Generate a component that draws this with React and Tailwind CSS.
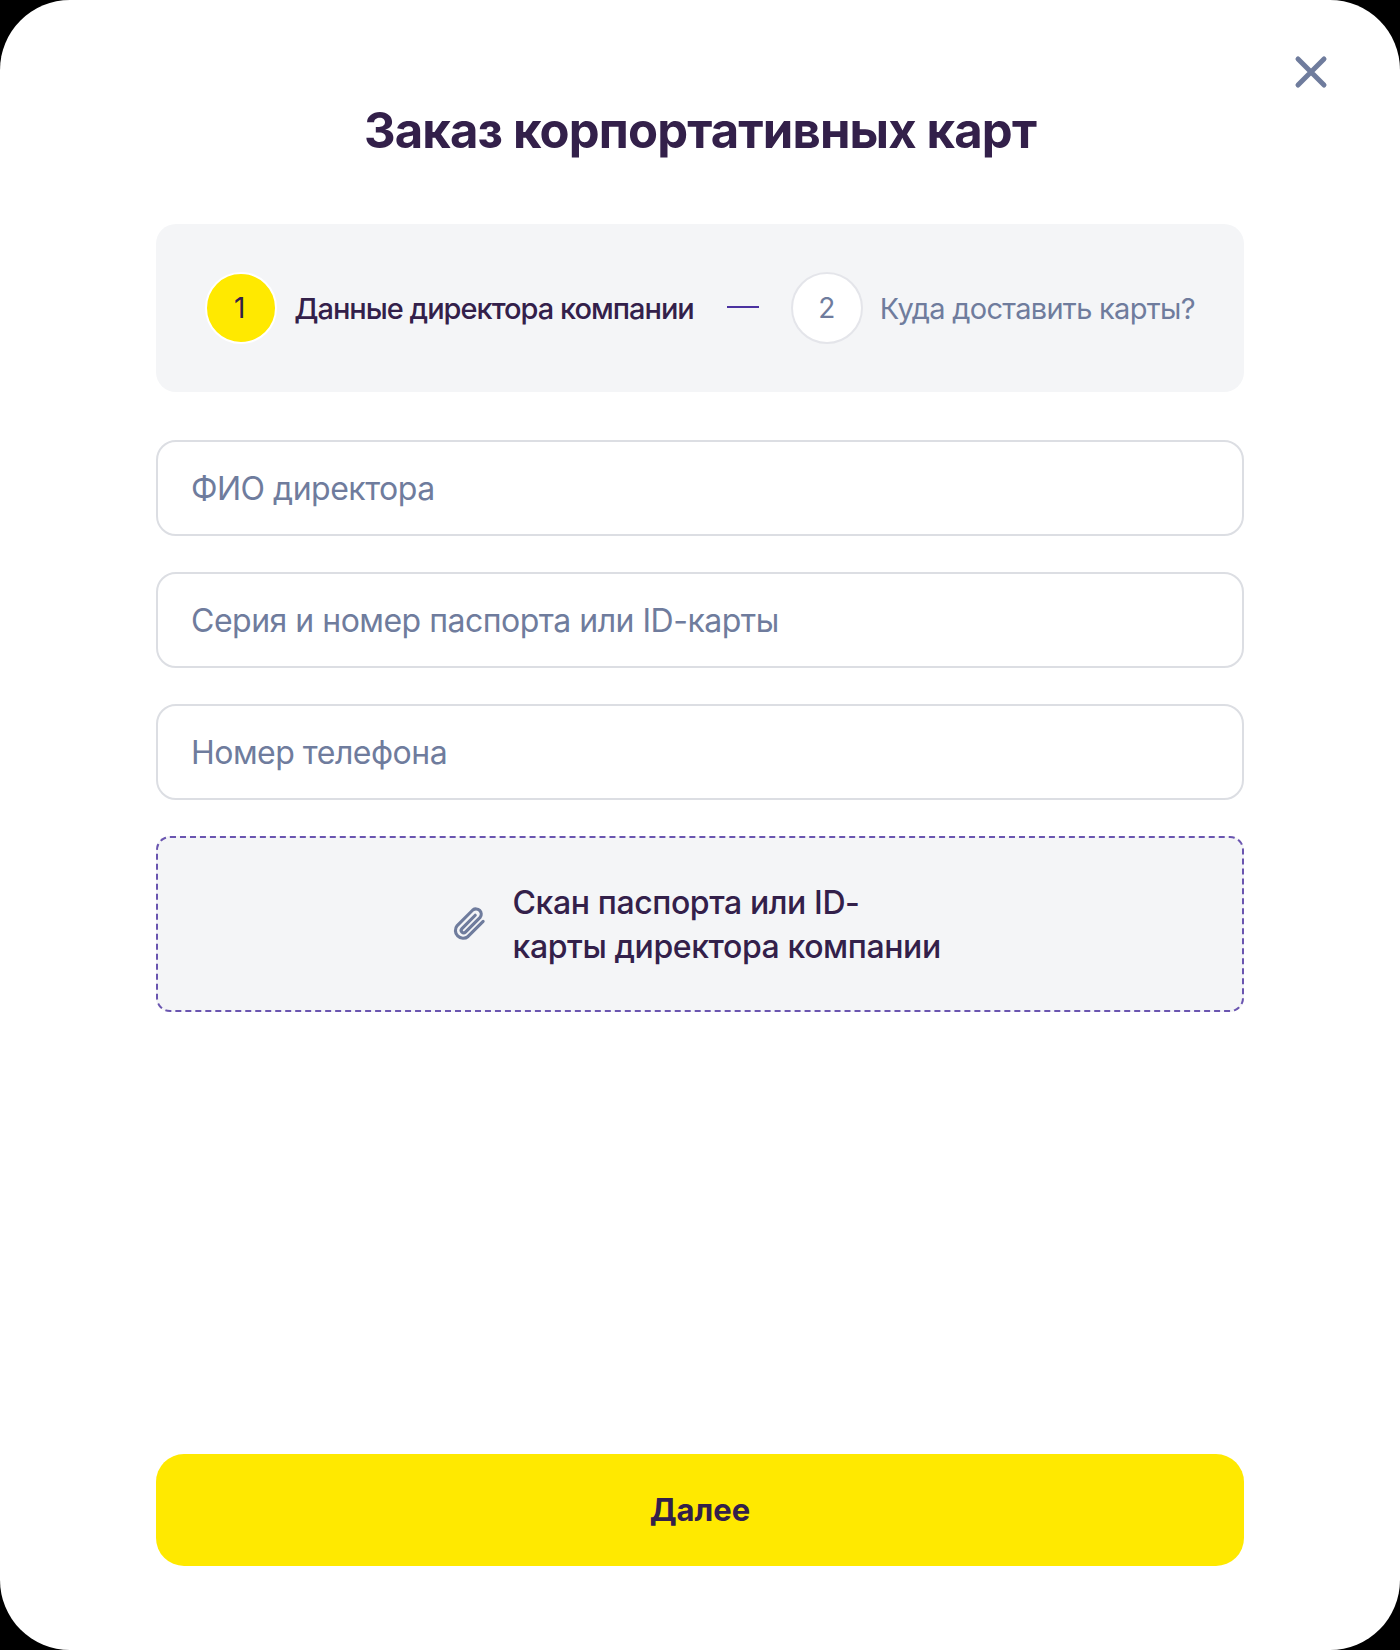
import React from 'react';

const font = { fontFamily: 'Inter, "Noto Sans", sans-serif' };

const Field = ({ placeholder }) => (
  <input
    placeholder={placeholder}
    className="w-full h-[96px] rounded-[20px] border-2 border-[#dcdee3] bg-white px-[33px] text-[32px] tracking-[-0.5px] text-[#33204a] placeholder:text-[#6f7c9d] placeholder:opacity-100 outline-none"
  />
);

const App = () => {
  return (
    <div className="w-[1400px] h-[1650px] bg-black" style={font}>
      <div className="relative w-full h-full bg-white rounded-[70px] flex flex-col px-[156px] pb-[84px]">
        <button className="absolute top-[55px] right-[72px] text-[#6f7c9d]">
          <svg width="34" height="34" viewBox="0 0 34 34" fill="none" stroke="currentColor" strokeWidth="5" strokeLinecap="round">
            <path d="M4 4l26 26M30 4L4 30" />
          </svg>
        </button>

        <h1 className="mt-[97px] text-center text-[49px] leading-[68px] font-bold tracking-[-0.85px] text-[#33204a]">
          Заказ корпортативных карт
        </h1>

        {/* шаги */}
        <div className="mt-[59px] h-[168px] rounded-[20px] bg-[#f4f5f7] flex items-center justify-center">
          <div className="w-[72px] h-[72px] rounded-full bg-[#ffe900] border-2 border-white flex items-center justify-center pr-[3px] text-[28px] text-[#33204a]">
            1
          </div>
          <span className="ml-[17px] pt-[2px] text-[29px] font-medium tracking-[-1px] text-[#33204a]">Данные директора компании</span>
          <div className="ml-[33px] mb-[2px] w-[32px] h-[2px] bg-[#4b32a0]" />
          <div className="ml-[32px] w-[72px] h-[72px] rounded-full bg-white border-2 border-[#e4e5ea] flex items-center justify-center text-[28px] text-[#6f7c9d]">
            2
          </div>
          <span className="ml-[17px] pt-[2px] text-[29px] tracking-[-0.7px] text-[#6f7c9d]">Куда доставить карты?</span>
        </div>

        <div className="mt-[48px] flex flex-col gap-[36px]">
          <Field placeholder="ФИО директора" />
          <Field placeholder="Серия и номер паспорта или ID-карты" />
          <Field placeholder="Номер телефона" />
        </div>

        {/* загрузка скана */}
        <div className="mt-[36px] h-[176px] rounded-[14px] bg-[#f4f5f7] border-2 border-dashed border-[#6a55b0] flex items-center justify-center gap-[22px] pr-[8px]">
          <svg width="42" height="42" viewBox="0 0 24 24" fill="none" stroke="#6f7c9d" strokeWidth="1.8" strokeLinecap="round" strokeLinejoin="round">
            <path d="M19.5 10.5l-8.6 8.6a4.4 4.4 0 0 1-6.2-6.2l8.9-8.9a3 3 0 0 1 4.2 4.2l-8.4 8.4a1.4 1.4 0 0 1-2-2l7.6-7.6" />
          </svg>
          <p className="w-[431px] pt-[2px] text-[32px] leading-[44px] font-medium tracking-[-0.4px] text-[#33204a]">
            Скан паспорта или ID-карты директора компании
          </p>
        </div>

        <button className="mt-auto h-[112px] rounded-[28px] bg-[#ffe900] text-[31px] font-bold text-[#33204a]">
          Далее
        </button>
      </div>
    </div>
  );
};

export default App;
